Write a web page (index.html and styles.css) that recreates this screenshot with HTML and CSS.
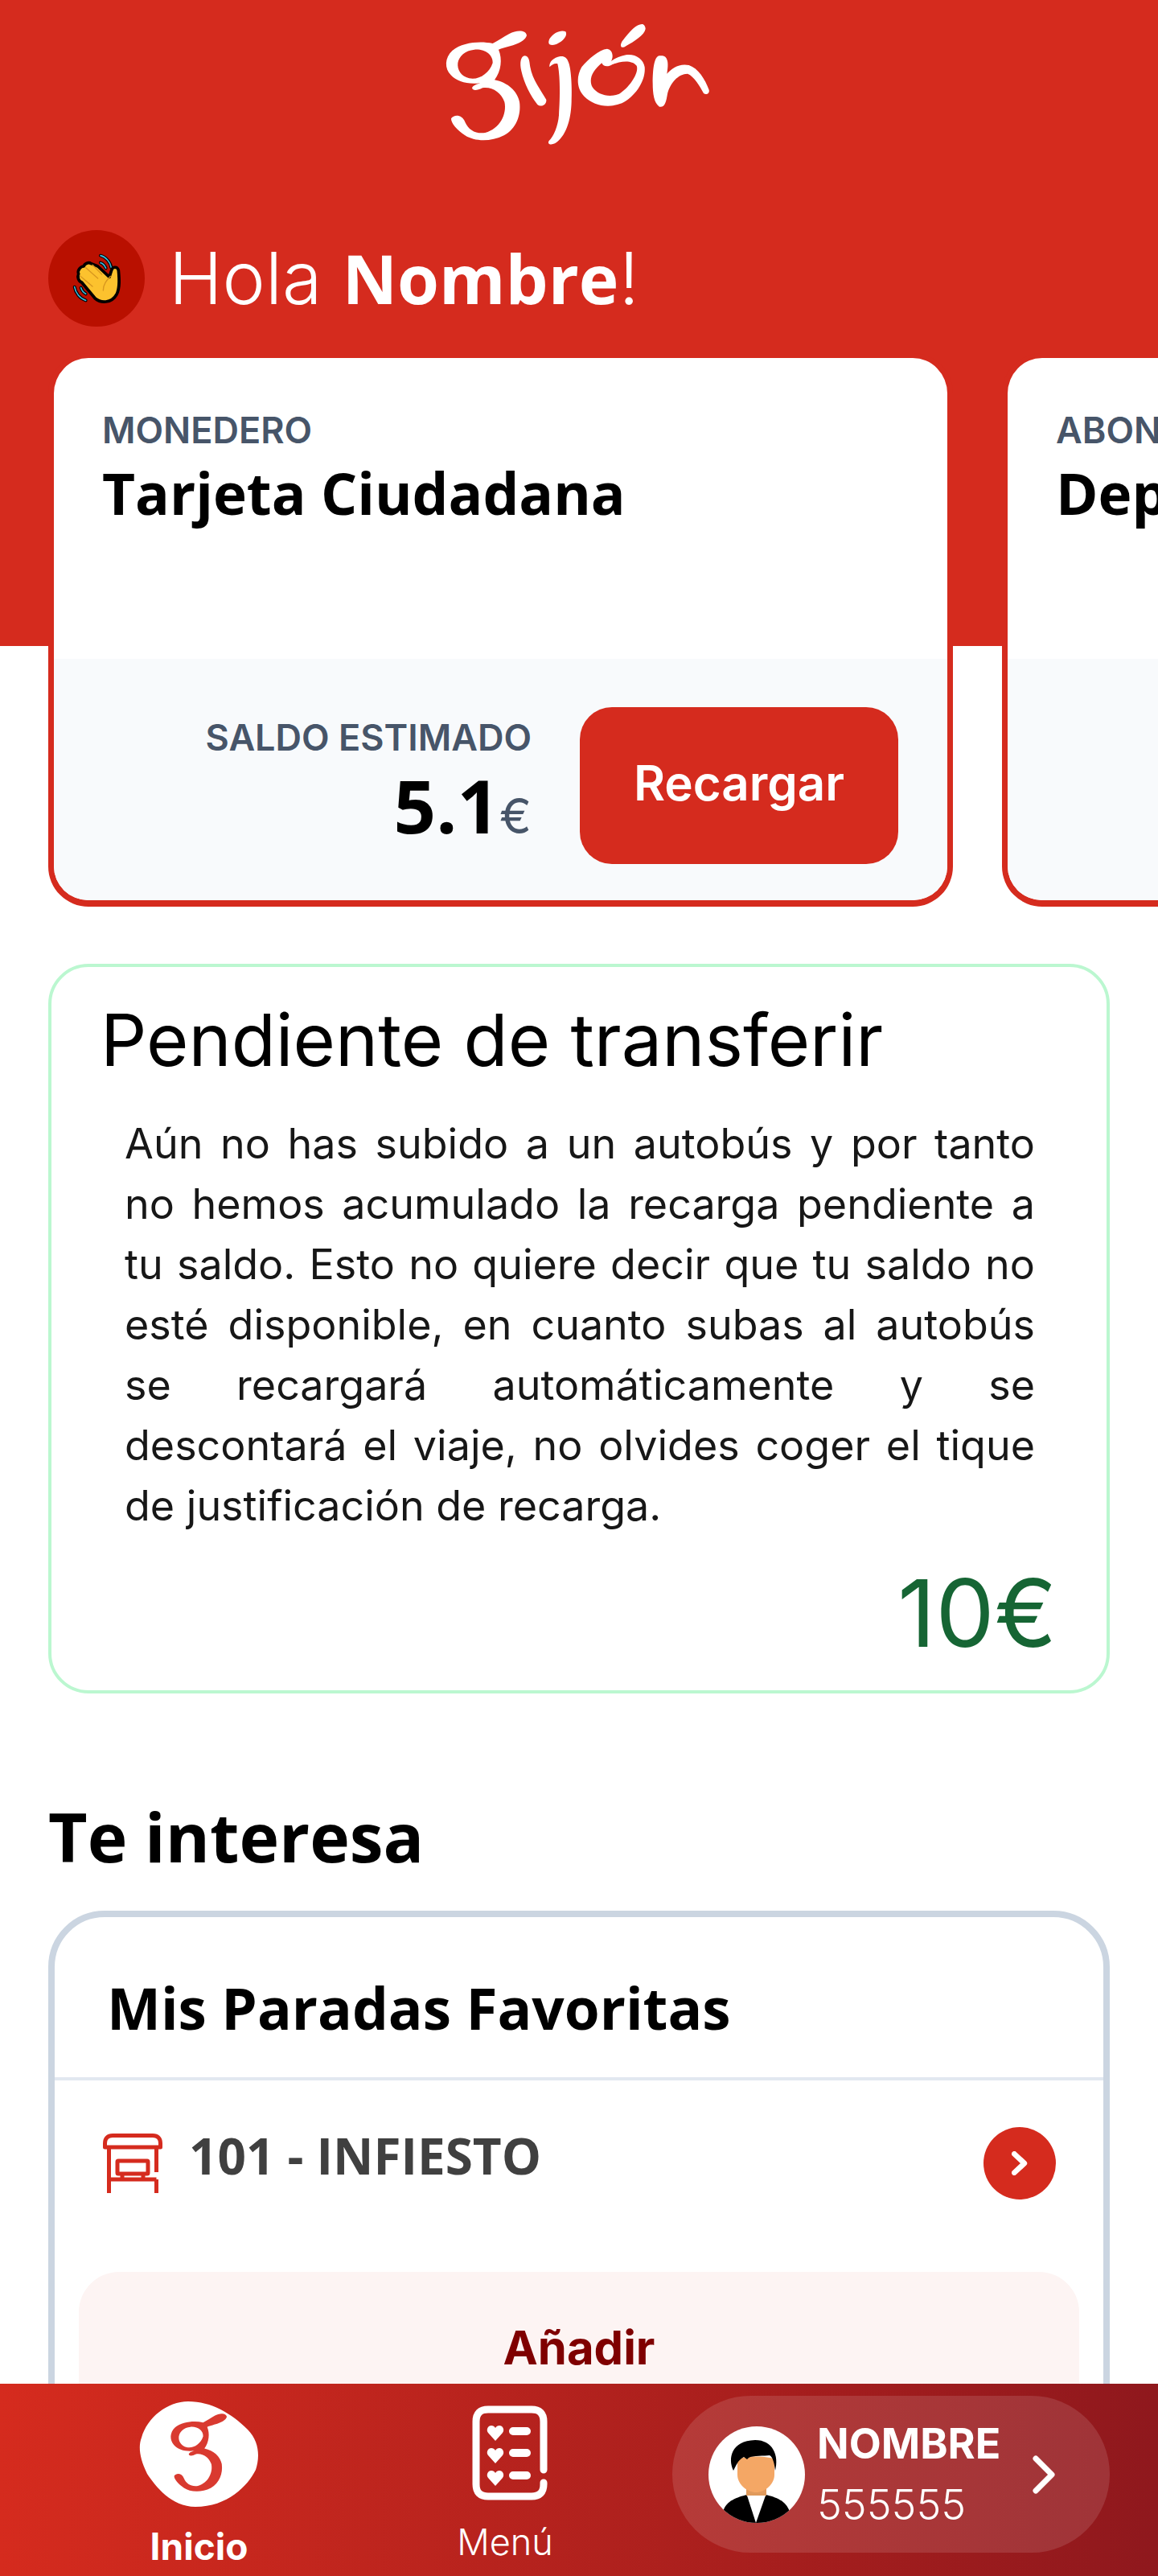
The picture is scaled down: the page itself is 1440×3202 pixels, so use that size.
FILE: index.html
```html
<!DOCTYPE html>
<html lang="es">
<head>
 <meta charset="UTF-8">
 <meta name="viewport" content="width=device-width, initial-scale=1.0">
 <title>Gijón</title>
 <link rel="stylesheet" href="styles.css">
</head>
<body>
 <div class="top">
 <header class="logo-bar">
 <svg class="logo" viewBox="0 0 1080 510" fill="#fff" fill-rule="evenodd">
 <path id="gee" d="M345 72C342 50 305 52 280 66C258 78 238 92 218 102C170 92 105 98 68 128C38 155 38 195 62 220C85 245 125 256 172 250C160 254 145 258 141 268C144 280 160 278 180 268C215 262 250 285 262 320C272 365 245 420 190 435C155 440 128 425 115 395C105 368 75 365 63 382C62 400 85 425 115 445C150 468 210 470 260 445C305 420 325 370 318 320C310 280 275 248 225 238C250 205 255 160 240 125C275 112 335 105 345 72ZM150 125C190 122 220 145 218 175C205 215 165 240 130 232C100 225 85 200 88 175C92 150 115 128 150 125Z"/>
 <path d="M338 148C322 150 318 175 325 205C335 250 360 300 385 330C400 342 420 330 418 312C400 280 365 235 358 190C355 170 355 150 338 148Z"/>
 <path d="M490 58C475 50 445 60 430 85C420 108 435 112 455 105C475 98 500 75 490 58Z"/>
 <path d="M470 150C445 155 428 170 430 190C440 180 450 175 460 178C470 220 470 300 465 370C462 410 445 450 428 465C420 478 435 482 450 475C490 450 510 390 512 320C515 260 510 190 500 170C495 155 485 148 470 150Z"/>
 <path d="M645 122C615 125 575 160 550 190C530 225 530 270 560 300C595 335 650 345 700 325C750 300 790 240 785 190C780 160 750 140 715 145C690 150 670 160 660 168C670 150 665 125 645 122ZM625 175C630 190 650 190 665 180C690 170 735 160 755 185C765 210 730 265 690 290C655 305 610 295 590 265C575 235 590 205 625 175Z"/>
 <path d="M775 30C755 30 730 55 700 95C690 115 700 122 715 112C745 95 785 70 788 48C788 38 782 30 775 30Z"/>
 <path d="M840 148C820 150 815 200 815 250C815 290 820 325 840 338C860 342 865 320 870 290C880 250 910 215 945 215C970 225 990 260 1005 288C1015 296 1028 288 1025 275C1010 235 985 195 950 183C915 175 885 195 868 215C872 190 875 165 862 152C855 147 848 147 840 148Z"/>
 </svg>
 </header>

 <div class="greeting">
 <span class="wave">
 <svg viewBox="0 0 360 360" width="120" height="120" fill="none" stroke-linecap="round" stroke-linejoin="round">
 <path d="M195 95C215 100 232 120 235 140M195 122C205 125 212 135 215 142M98 212C102 235 118 255 140 262M122 215C125 225 130 232 140 238" stroke="#000" stroke-width="12"/>
 <path d="M195 95C215 100 232 120 235 140M195 122C205 125 212 135 215 142M98 212C102 235 118 255 140 262M122 215C125 225 130 232 140 238" stroke="#38b6d8" stroke-width="5"/>
 <path d="M160 125C150 118 135 125 133 135C120 135 108 150 113 163C108 175 112 190 125 195L175 255C195 272 235 275 255 240C268 215 265 180 262 150C258 135 240 135 236 150L228 175L185 135Z" fill="#fcc22e" stroke="#000" stroke-width="11"/>
 <path d="M165 130L200 165M140 140L185 180M118 170L165 210M205 225C205 200 220 185 232 172" stroke="#d8971f" stroke-width="4"/>
 </svg>
 </span>
 <h1 class="hello">Hola <b>Nombre</b>!</h1>
 </div>

 <div class="cards">
 <article class="wallet">
 <div class="wallet-head">
 <span class="kicker">MONEDERO</span>
 <h2 class="wallet-title">Tarjeta Ciudadana</h2>
 </div>
 <div class="wallet-foot">
 <div class="balance">
 <span class="kicker">SALDO ESTIMADO</span>
 <span class="amount">5.1<small>€</small></span>
 </div>
 <button class="btn-red">Recargar</button>
 </div>
 </article>
 <article class="wallet">
 <div class="wallet-head">
 <span class="kicker">ABONO</span>
 <h2 class="wallet-title">Deportes</h2>
 </div>
 <div class="wallet-foot"></div>
 </article>
 </div>
 </div>

 <section class="pending">
 <h2 class="pending-title">Pendiente de transferir</h2>
 <p class="pending-text">Aún no has subido a un autobús y por tanto no hemos acumulado la recarga pendiente a tu saldo. Esto no quiere decir que tu saldo no esté disponible, en cuanto subas al autobús se recargará automáticamente y se descontará el viaje, no olvides coger el tique de justificación de recarga.</p>
 <div class="pending-amount">10€</div>
 </section>

 <h2 class="section-title">Te interesa</h2>

 <section class="favs">
 <h3 class="favs-title">Mis Paradas Favoritas</h3>
 <div class="stop">
 <svg class="stop-icon" viewBox="0 0 74 74" fill="none" stroke="#d52b1e" stroke-width="5">
 <path d="M2.5 17V12C2.5 6 6 2.5 12 2.5H62C68 2.5 71.500 6 71.500 12V17Z" stroke-linejoin="round"/>
 <path d="M7.500 17V74M66.500 17V48M66.500 57V74M7.500 57H66.500"/>
 <rect x="18" y="34" width="38" height="16" rx="1"/>
 <path d="M24 50V57M50 50V57"/>
 </svg>
 <span class="stop-name">101 - INFIESTO</span>
 <span class="go">
 <svg viewBox="0 0 24 36" width="20" height="30" fill="none" stroke="#fff" stroke-width="8" stroke-linecap="round" stroke-linejoin="round"><path d="M4 4L19 18L4 32"/></svg>
 </span>
 </div>
 <button class="btn-add">Añadir</button>
 </section>

 <nav class="tabbar">
 <a class="tab tab-active" href="#inicio">
 <svg viewBox="0 0 149 131" width="149" height="131">
 <path d="M61 0C90 0 115 15 135 35C150 50 150 70 145 85C135 105 110 131 70 131C40 131 20 105 10 90C0 70 -1 55 3 45C10 20 35 0 61 0Z" fill="#fff"/>
 <use href="#gee" transform="translate(29 2) scale(.232 .237)" fill="#d93a30" fill-rule="evenodd"/>
 </svg>
 <span>Inicio</span>
 </a>
 <a class="tab" href="#menu">
 <svg viewBox="0 0 94 118" width="94" height="118" fill="none" stroke="#fff" stroke-width="9" stroke-linecap="round">
 <path d="M89 80V20C89 10 84 5 74 5H20C10 5 5 10 5 20V98C5 108 10 113 20 113H74C84 113 89 108 89 98V96"/>
 <path d="M51 32H68M51 59H68M51 87H68" stroke-width="10"/>
 <g fill="#fff" stroke="none">
 <path d="M29 44L20 34C17 30 20 25 24 25C26 25 28 26 29 28C30 26 32 25 34 25C38 25 41 30 38 34Z"/>
 <path d="M29 72L20 62C17 58 20 53 24 53C26 53 28 54 29 56C30 54 32 53 34 53C38 53 41 58 38 62Z"/>
 <path d="M29 100L20 90C17 86 20 81 24 81C26 81 28 82 29 84C30 82 32 81 34 81C38 81 41 86 38 90Z"/>
 </g>
 </svg>
 <span>Menú</span>
 </a>
 <a class="profile" href="#perfil">
 <svg class="avatar" viewBox="0 0 120 120">
 <defs><clipPath id="round"><circle cx="60" cy="60" r="60"/></clipPath></defs>
 <circle cx="60" cy="60" r="60" fill="#fff"/>
 <g clip-path="url(#round)">
 <path d="M18 106C22 92 36 88 48 85H71C84 88 96 92 101 106L80 130H40Z" fill="#000"/>
 <path d="M47 70H72V86L59 92L47 86Z" fill="#e09a5c"/>
 <path d="M48 86H71L59 120Z" fill="#fff"/>
 <path d="M36 42C36 36 82 36 82 42V60C82 72 70 82 59 82C48 82 36 72 36 60Z" fill="#f4a765"/>
 <path d="M31 55C24 40 28 18 58 17C80 17 88 36 83 55C82 46 80 38 76 36C70 37 55 36 50 39L48 41L44 38C36 42 34 50 31 55Z" fill="#000"/>
 </g>
 </svg>
 <div class="profile-text">
 <strong>NOMBRE</strong>
 <span>555555</span>
 </div>
 <svg class="profile-chevron" viewBox="0 0 28 48" width="28" height="48" fill="none" stroke="#fff" stroke-width="7" stroke-linecap="round" stroke-linejoin="round"><path d="M4 4L24 24L4 44"/></svg>
 </a>
 </nav>
</body>
</html>
```

FILE: styles.css
```css
html {
overflow: hidden;
}
body {
margin: 0;
height: 3202px;
overflow: hidden;
background-color: #fff;
font-family: 'Inter', sans-serif;
color: #000;
}
h1, h2, h3, p {
margin: 0;
}
.top {
background: linear-gradient(#d52b1e 803px, #fff 803px);
}
.logo-bar {
display: flex;
justify-content: center;
padding-top: 20px;
height: 259px;
box-sizing: border-box;
}
.logo {
width: 360px;
height: 170px;
}
.greeting {
display: flex;
align-items: center;
gap: 30px;
padding-left: 60px;
height: 120px;
margin-top: 27px;
}
.wave {
width: 120px;
height: 120px;
border-radius: 50%;
background-color: #b91000;
}
.hello {
color: #fff;
font-size: 90px;
font-weight: 300;
line-height: 116px;
}
.hello b {
font-family: 'Open Sans', sans-serif;
font-size: 84px;
font-weight: 700;
}
.cards {
display: flex;
gap: 61px;
padding-left: 60px;
margin-top: 33px;
overflow: hidden;
}
.wallet {
flex: none;
width: 1125px;
height: 688px;
box-sizing: border-box;
border: solid #d52b1e;
border-width: 6px 7px 8px 7px;
border-radius: 50px;
background-color: #fff;
overflow: hidden;
display: flex;
flex-direction: column;
}
.wallet-head {
height: 374px;
box-sizing: border-box;
padding: 62px 0 0 60px;
}
.kicker {
display: block;
color: #475569;
font-size: 45px;
font-weight: 600;
line-height: 56px;
}
.wallet-title {
font-family: 'Open Sans', sans-serif;
font-size: 71px;
font-weight: 700;
line-height: 100px;
}
.wallet-foot {
flex: 1;
background-color: #f8fafc;
display: flex;
justify-content: flex-end;
padding: 60px 61px 0 0;
gap: 60px;
}
.balance {
display: flex;
flex-direction: column;
align-items: flex-end;
padding-top: 10px;
}
.amount {
font-family: 'Open Sans', sans-serif;
font-size: 92px;
font-weight: 700;
line-height: 112px;
}
.amount small {
font-family: 'Inter', sans-serif;
color: #475569;
font-size: 60px;
font-weight: 400;
}
.btn-red {
width: 396px;
height: 195px;
border: 0;
border-radius: 40px;
background-color: #d52b1e;
color: #fff;
font-family: 'Inter', sans-serif;
font-size: 60px;
font-weight: 600;
padding: 0 0 8px;
}
.pending {
margin: 71px 60px 0;
height: 907px;
box-sizing: border-box;
border: 4px solid #bbf7d0;
border-radius: 50px;
padding: 36px 62px 0 61px;
}
.pending-title {
font-size: 90px;
font-weight: 400;
line-height: 110px;
}
.pending-text {
margin: 36px 27px 0 30px;
font-size: 52px;
line-height: 75px;
text-align: justify;
color: #171717;
}
.pending-amount {
text-align: right;
color: #166534;
font-size: 116px;
font-weight: 400;
line-height: 120px;
margin-top: 36px;
}
.section-title {
margin: 123px 0 0 60px;
font-family: 'Open Sans', sans-serif;
font-size: 84px;
font-weight: 700;
line-height: 110px;
}
.favs {
margin: 37px 60px 0;
height: 900px;
box-sizing: border-box;
border: 8px solid #cbd5e1;
border-radius: 70px;
}
.favs-title {
font-family: 'Open Sans', sans-serif;
font-size: 71px;
font-weight: 700;
line-height: 90px;
padding: 68px 0 41px 65px;
border-bottom: 4px solid #e2e8f0;
}
.stop {
display: flex;
align-items: center;
padding: 58px 59px 0 60px;
}
.stop-icon {
width: 74px;
height: 74px;
margin-right: 33px;
}
.stop-name {
flex: 1;
font-family: 'Open Sans', sans-serif;
font-size: 62px;
font-weight: 700;
line-height: 60px;
color: #404040;
padding-bottom: 20px;
}
.go {
width: 90px;
height: 90px;
border-radius: 50%;
background-color: #d52b1e;
display: flex;
align-items: center;
justify-content: center;
}
.btn-add {
display: block;
width: 1244px;
height: 240px;
margin: 90px 0 0 30px;
border: 0;
border-radius: 50px;
background-color: #fdf4f3;
color: #7f0000;
font-family: 'Inter', sans-serif;
font-size: 58px;
font-weight: 700;
padding: 0 0 52px;
}
.tabbar {
position: fixed;
left: 0;
right: 0;
bottom: 0;
height: 239px;
display: flex;
align-items: flex-start;
background: linear-gradient(90deg, #d52b1e, #8f181d);
}
.tab {
display: flex;
flex-direction: column;
align-items: center;
justify-content: flex-start;
height: 239px;
box-sizing: border-box;
padding-top: 22px;
color: #fff;
text-decoration: none;
font-size: 46px;
font-weight: 300;
}
.tab-active {
width: 149px;
margin-left: 173px;
font-weight: 700;
}
.tab-active span {
margin-top: 21px;
}
.tab:nth-child(2) {
width: 94px;
margin-left: 265px;
padding-top: 27px;
font-size: 45px;
}
.tab:nth-child(2) span {
margin: 24px 12px 0 0;
}
.profile {
display: flex;
align-items: center;
flex: none;
width: 544px;
height: 195px;
margin: 15px 0 0 155px;
box-sizing: border-box;
padding-left: 45px;
border-radius: 98px;
background-color: rgba(255, 255, 255, 0.12);
color: #fff;
text-decoration: none;
}
.avatar {
width: 120px;
height: 120px;
margin-right: 15px;
}
.profile-text {
display: flex;
flex-direction: column;
width: 268px;
font-size: 52px;
line-height: 76px;
}
.profile-text strong {
font-weight: 700;
}
.profile-text span {
font-weight: 300;
}
```
